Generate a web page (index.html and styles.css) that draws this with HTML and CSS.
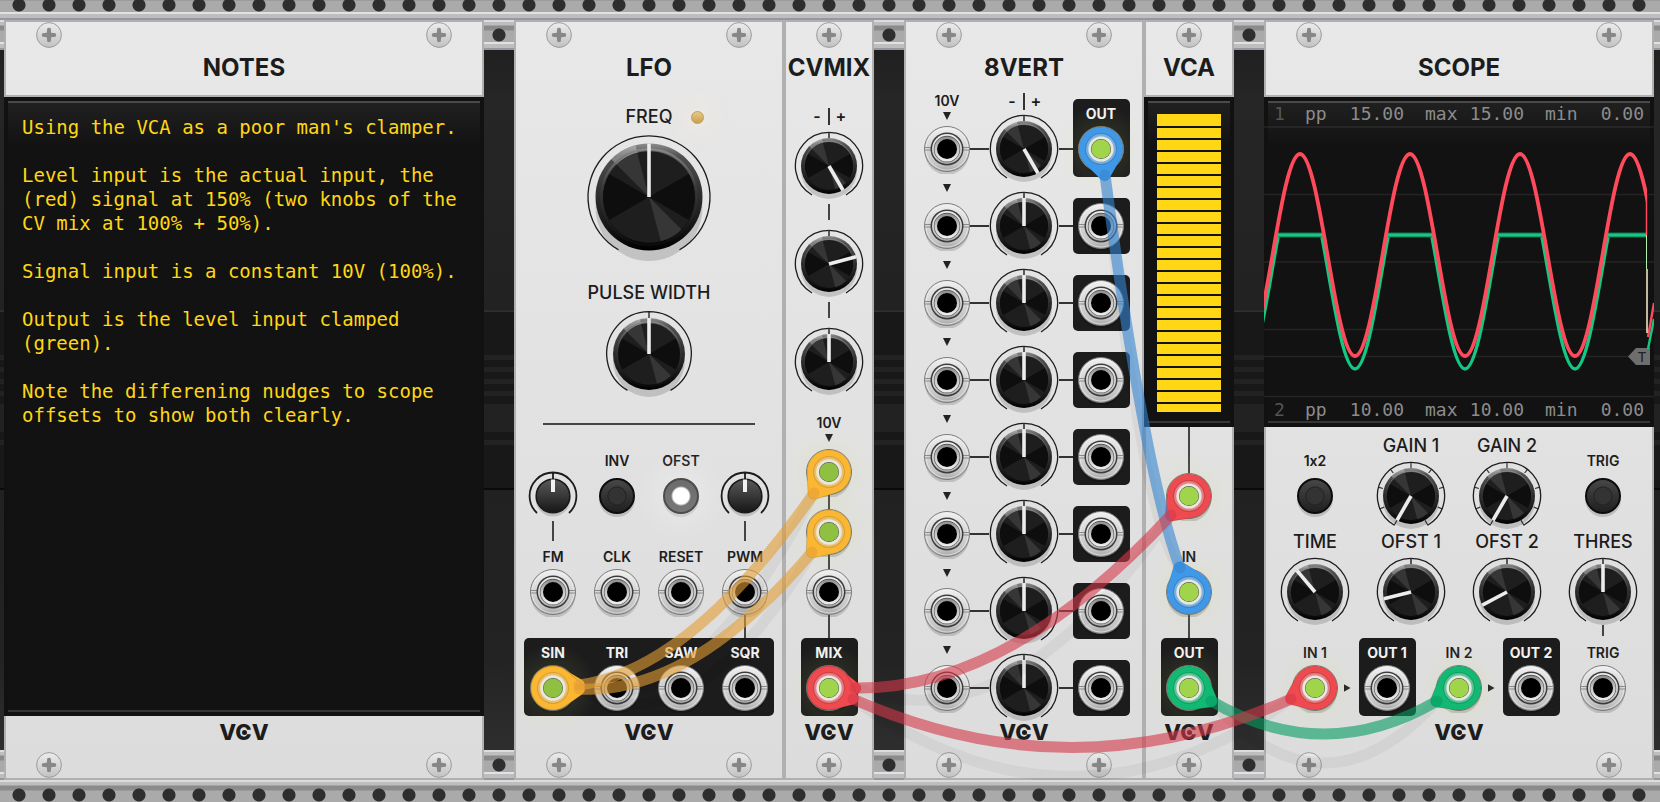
FILE: index.html
```html
<!DOCTYPE html>
<html lang="en">
<head>
<meta charset="utf-8">
<title>Modular rack</title>
<link rel="stylesheet" href="styles.css">
</head>
<body>
<svg class="sprites" aria-hidden="true">
  <defs>
    <linearGradient id="rim" x1="0" y1="0" x2="0" y2="1"><stop offset="0" stop-color="#8c8c8c"/><stop offset=".12" stop-color="#505050"/><stop offset=".5" stop-color="#2c2c2c"/><stop offset=".85" stop-color="#101010"/><stop offset="1" stop-color="#000"/></linearGradient>
    <linearGradient id="inner-rim" x1="0" y1="0" x2="0" y2="1"><stop offset="0" stop-color="#8a8a8a"/><stop offset=".4" stop-color="#3a3a3a"/><stop offset="1" stop-color="#0c0c0c"/></linearGradient>
    <linearGradient id="metal" x1="0" y1="0" x2="0" y2="1"><stop offset="0" stop-color="#f0f0f0"/><stop offset=".5" stop-color="#d4d4d4"/><stop offset=".85" stop-color="#c4c4c4"/><stop offset="1" stop-color="#a2a2a2"/></linearGradient>
    <linearGradient id="metal-low" x1="0" y1="0" x2="0" y2="1"><stop offset="0" stop-color="#8c8c8c"/><stop offset=".5" stop-color="#c8c8c8"/><stop offset="1" stop-color="#f0f0f0"/></linearGradient>
    <linearGradient id="trim-fill" x1="0" y1="0" x2="0" y2="1"><stop offset="0" stop-color="#5a5a5a"/><stop offset="1" stop-color="#161616"/></linearGradient>
    <linearGradient id="screw-fill" x1="0" y1="0" x2="0" y2="1"><stop offset="0" stop-color="#ececec"/><stop offset="1" stop-color="#c2c2c2"/></linearGradient>
    <radialGradient id="glow"><stop offset="0" stop-color="#c8dc60" stop-opacity=".22"/><stop offset=".5" stop-color="#c8dc60" stop-opacity=".08"/><stop offset="1" stop-color="#e8ecb0" stop-opacity="0"/></radialGradient>
    <clipPath id="sweep"><rect x="0" y="0" width="383" height="330"/></clipPath>
    <clipPath id="clamp"><rect x="0" y="136" width="383" height="194"/></clipPath>
  </defs>
  <symbol id="body" viewBox="-28 -28 56 56" overflow="visible">
    <circle r="28" fill="url(#rim)"/>
    <path d="M0 0L-20-20A28 28 0 0 1-7-27Z" fill="#fff" opacity=".3"/>
    <circle r="24" fill="#1e1e1e"/>
    <path d="M0 0L20.8-12A24 24 0 0 1 20.8 12ZM0 0L-20.8 12A24 24 0 0 1-20.8-12Z" fill="#0e0e0e"/>
    <path d="M0 0L17 17A24 24 0 0 1 6.2 23.2ZM0 0L-17-17A24 24 0 0 1-6.2-23.2Z" fill="#363636"/>
    <circle r="25" fill="none" stroke="url(#inner-rim)"/>
  </symbol>
  <symbol id="dial" viewBox="-35 -35 70 70">
    <circle cy="5" r="28" fill="#000" opacity=".15"/>
    <path d="M-17 29A33.6 33.6 0 1 1 17 29" fill="none" stroke="#1c1c1c" stroke-width="1.3"/>
    <use href="#body" x="-28" y="-28" width="56" height="56"/>
  </symbol>
  <symbol id="pointer" viewBox="-35 -35 70 70"><path d="M0 0V-28" stroke="#ececec" stroke-width="3.6"/></symbol>
  <symbol id="tick" viewBox="-35 -35 70 70"><path d="M0-34V-28" stroke="#333" stroke-width="1.6"/></symbol>
  <symbol id="scale" viewBox="-35 -35 70 70">
    <g stroke="#333" stroke-width="1.2"><path d="M0-34V-28"/><path d="M0-34V-29" transform="rotate(37.5)"/><path d="M0-34V-29" transform="rotate(75)"/><path d="M0-34V-29" transform="rotate(112.5)"/><path d="M0-34V-28" transform="rotate(150)"/><path d="M0-34V-29" transform="rotate(-37.5)"/><path d="M0-34V-29" transform="rotate(-75)"/><path d="M0-34V-29" transform="rotate(-112.5)"/><path d="M0-34V-28" transform="rotate(-150)"/></g>
  </symbol>
  <symbol id="trim" viewBox="-25 -25 50 50">
    <circle cy="3" r="17.5" fill="#000" opacity=".15"/>
    <path d="M-16 17A23.4 23.4 0 1 1 16 17M0-23V-17" fill="none" stroke="#1c1c1c" stroke-width="1.8"/>
    <circle r="16.8" fill="url(#trim-fill)" stroke="#1a1a1a" stroke-width="1.6"/>
    <path d="M0-4V-16.5" stroke="#f2f2f2" stroke-width="4"/>
  </symbol>
  <symbol id="jack" viewBox="-25 -25 50 50">
    <circle cy="4" r="22" fill="#000" opacity=".15"/>
    <circle r="22.5" fill="url(#metal)" stroke="#7a7a7a"/>
    <circle r="21" fill="none" stroke="#f4f4f4" stroke-width="1" opacity=".6"/>
    <path d="M-22-1.5H-15V1H-22M22-1.5H15V1H22" fill="none" stroke="#8a8a8a"/>
    <circle r="16.5" fill="#3c3c3c"/>
    <circle r="15" fill="url(#metal)"/>
    <circle r="13.2" fill="#4a4a4a"/>
    <circle r="12.6" fill="url(#metal-low)"/>
    <circle r="10" fill="#000"/>
  </symbol>
  <symbol id="screw" viewBox="-13 -13 26 26">
    <circle r="12.4" fill="url(#screw-fill)" stroke="#9b9b9b"/>
    <path d="M-1.8-6.5Q0-8 1.8-6.5L2.2-2.2L6.5-1.8Q8 0 6.5 1.8L2.2 2.2L1.8 6.5Q0 8-1.8 6.5L-2.2 2.2L-6.5 1.8Q-8 0-6.5-1.8L-2.2-2.2Z" fill="#878787"/>
  </symbol>
  <symbol id="plug" viewBox="-36 -36 72 72">
    <path d="M13.5-17.3L29.7-4.7A6 6 0 0 1 29.7 4.7L13.5 17.3A22 22 0 1 1 13.5-17.3Z" fill="currentColor" stroke="#000" stroke-opacity=".15"/>
  </symbol>
  <symbol id="socket" viewBox="-36 -36 72 72">
    <circle r="14.5" fill="none" stroke="#000" stroke-width="3" opacity=".14"/>
    <circle r="13.5" fill="none" stroke="#fff" stroke-width="3" opacity=".35"/>
    <circle r="11.3" fill="#444" stroke="#e8e8e0" stroke-width="2.6"/>
    <circle r="9.6" fill="currentColor"/>
  </symbol>
</svg>

<div class="rail rail-above"></div>
<main class="rack">
  <section class="module notes">
    <header class="head"><div class="screws"><svg class="screw"><use href="#screw"/></svg><svg class="screw"><use href="#screw"/></svg></div><h2>NOTES</h2></header>
    <textarea class="display note-text" aria-label="Notes" spellcheck="false">Using the VCA as a poor man's clamper.

Level input is the actual input, the
(red) signal at 150% (two knobs of the
CV mix at 100% + 50%).

Signal input is a constant 10V (100%).

Output is the level input clamped
(green).

Note the differening nudges to scope
offsets to show both clearly.</textarea>
    <footer class="foot"><div class="logo">V<span>C</span>V</div><div class="screws"><svg class="screw"><use href="#screw"/></svg><svg class="screw"><use href="#screw"/></svg></div></footer>
  </section>

  <div class="patch">
    <section class="module lfo">
      <header class="head"><div class="screws"><svg class="screw"><use href="#screw"/></svg><svg class="screw"><use href="#screw"/></svg></div><h2>LFO</h2></header>
      <div class="freq-row"><label class="name" for="freq">FREQ</label><span class="led"></span></div>
      <div class="dial dial-large"><svg viewBox="-65 -65 130 130"><circle cy="10.5" r="53.5" opacity=".15"/><path class="ring" d="M-30.5 52.8A61 61 0 1 1 30.5 52.8"/><use href="#body" x="-53.5" y="-53.5" width="107" height="107"/><path class="hand" d="M0 0V-53.5"/></svg><input id="freq" type="range"></div>
      <label class="name width-name" for="pw">PULSE WIDTH</label>
      <div class="dial dial-medium"><svg viewBox="-46 -46 92 92"><circle cy="7" r="36" opacity=".15"/><path class="ring" d="M-21.5 36.4A42.3 42.3 0 1 1 21.5 36.4M0-42V-36"/><use href="#body" x="-36" y="-36" width="72" height="72"/><path class="hand" d="M0 0V-36"/></svg><input id="pw" type="range"></div>
      <hr class="divider">
      <div class="quad">
        <div class="cell"><span class="tag"></span><div class="dial dial-trim"><svg><use href="#trim"/></svg><input type="range" aria-label="FM amount"></div></div>
        <div class="cell"><label class="tag" for="inv">INV</label><button id="inv" class="push" type="button"></button></div>
        <div class="cell"><label class="tag" for="ofst">OFST</label><button id="ofst" class="push on" type="button"></button></div>
        <div class="cell"><span class="tag"></span><div class="dial dial-trim"><svg><use href="#trim"/></svg><input type="range" aria-label="PWM amount"></div></div>
      </div>
      <div class="quad stubs"><i class="wire"></i><i></i><i></i><i class="wire"></i></div>
      <div class="quad">
        <div class="cell"><span class="tag">FM</span><svg class="jack"><use href="#jack"/></svg></div>
        <div class="cell"><span class="tag">CLK</span><svg class="jack"><use href="#jack"/></svg></div>
        <div class="cell"><span class="tag">RESET</span><svg class="jack"><use href="#jack"/></svg></div>
        <div class="cell"><span class="tag">PWM</span><svg class="jack"><use href="#jack"/></svg></div>
      </div>
      <div class="quad link"><i></i><i></i><i></i><i class="wire"></i></div>
      <div class="plate quad wide">
        <div class="cell"><span class="tag">SIN</span><svg class="jack"><use href="#jack"/></svg></div>
        <div class="cell"><span class="tag">TRI</span><svg class="jack"><use href="#jack"/></svg></div>
        <div class="cell"><span class="tag">SAW</span><svg class="jack"><use href="#jack"/></svg></div>
        <div class="cell"><span class="tag">SQR</span><svg class="jack"><use href="#jack"/></svg></div>
      </div>
      <footer class="foot"><div class="logo">V<span>C</span>V</div><div class="screws"><svg class="screw"><use href="#screw"/></svg><svg class="screw"><use href="#screw"/></svg></div></footer>
    </section>

    <section class="module narrow">
      <header class="head"><div class="screws"><svg class="screw"><use href="#screw"/></svg></div><h2>CVMIX</h2></header>
      <div class="polarity mix-polarity"><span>-</span><i></i><span>+</span></div>
      <div class="dial"><svg><use href="#dial"/><use href="#tick"/><use href="#pointer" transform="rotate(150 35 35)"/></svg><input type="range" aria-label="Level 1"></div>
      <i class="wire dash"></i>
      <div class="dial"><svg><use href="#dial"/><use href="#tick"/><use href="#pointer" transform="rotate(75 35 35)"/></svg><input type="range" aria-label="Level 2"></div>
      <i class="wire dash"></i>
      <div class="dial"><svg><use href="#dial"/><use href="#tick"/><use href="#pointer"/></svg><input type="range" aria-label="Level 3"></div>
      <span class="tag mix-volt">10V</span>
      <i class="tri mix-tri"></i>
      <svg class="jack"><use href="#jack"/></svg><i class="wire hop"></i>
      <svg class="jack"><use href="#jack"/></svg><i class="wire hop"></i>
      <svg class="jack"><use href="#jack"/></svg><i class="wire join"></i>
      <div class="plate"><span class="tag">MIX</span><svg class="jack"><use href="#jack"/></svg></div>
      <footer class="foot"><div class="logo">V<span>C</span>V</div><div class="screws"><svg class="screw"><use href="#screw"/></svg></div></footer>
    </section>

    <section class="module vert">
      <header class="head"><div class="screws"><svg class="screw"><use href="#screw"/></svg><svg class="screw"><use href="#screw"/></svg></div><h2>8VERT</h2></header>
      <div class="columns">
        <div class="inputs">
          <span class="tag">10V</span><i class="tri first"></i><svg class="jack"><use href="#jack"/></svg>
          <i class="tri"></i><svg class="jack"><use href="#jack"/></svg>
          <i class="tri"></i><svg class="jack"><use href="#jack"/></svg>
          <i class="tri"></i><svg class="jack"><use href="#jack"/></svg>
          <i class="tri"></i><svg class="jack"><use href="#jack"/></svg>
          <i class="tri"></i><svg class="jack"><use href="#jack"/></svg>
          <i class="tri"></i><svg class="jack"><use href="#jack"/></svg>
          <i class="tri"></i><svg class="jack"><use href="#jack"/></svg>
        </div>
        <div class="gains">
          <div class="polarity"><span>-</span><i></i><span>+</span></div>
          <div class="dial"><svg><use href="#dial"/><use href="#tick"/><use href="#pointer" transform="rotate(150 35 35)"/></svg><input type="range" aria-label="Gain 1"></div>
          <div class="dial"><svg><use href="#dial"/><use href="#tick"/><use href="#pointer"/></svg><input type="range" aria-label="Gain 2"></div>
          <div class="dial"><svg><use href="#dial"/><use href="#tick"/><use href="#pointer"/></svg><input type="range" aria-label="Gain 3"></div>
          <div class="dial"><svg><use href="#dial"/><use href="#tick"/><use href="#pointer"/></svg><input type="range" aria-label="Gain 4"></div>
          <div class="dial"><svg><use href="#dial"/><use href="#tick"/><use href="#pointer"/></svg><input type="range" aria-label="Gain 5"></div>
          <div class="dial"><svg><use href="#dial"/><use href="#tick"/><use href="#pointer"/></svg><input type="range" aria-label="Gain 6"></div>
          <div class="dial"><svg><use href="#dial"/><use href="#tick"/><use href="#pointer"/></svg><input type="range" aria-label="Gain 7"></div>
          <div class="dial"><svg><use href="#dial"/><use href="#tick"/><use href="#pointer"/></svg><input type="range" aria-label="Gain 8"></div>
        </div>
        <div class="outputs">
          <div class="plate"><span class="tag">OUT</span><svg class="jack"><use href="#jack"/></svg></div>
          <div class="plate bare"><svg class="jack"><use href="#jack"/></svg></div>
          <div class="plate bare"><svg class="jack"><use href="#jack"/></svg></div>
          <div class="plate bare"><svg class="jack"><use href="#jack"/></svg></div>
          <div class="plate bare"><svg class="jack"><use href="#jack"/></svg></div>
          <div class="plate bare"><svg class="jack"><use href="#jack"/></svg></div>
          <div class="plate bare"><svg class="jack"><use href="#jack"/></svg></div>
          <div class="plate bare"><svg class="jack"><use href="#jack"/></svg></div>
        </div>
      </div>
      <footer class="foot"><div class="logo">V<span>C</span>V</div><div class="screws"><svg class="screw"><use href="#screw"/></svg><svg class="screw"><use href="#screw"/></svg></div></footer>
    </section>

    <section class="module narrow">
      <header class="head tall"><div class="screws"><svg class="screw"><use href="#screw"/></svg></div><h2>VCA</h2></header>
      <div class="display level"><div class="bars" role="meter" aria-label="Level" aria-valuemin="0" aria-valuemax="25" aria-valuenow="25"></div></div>
      <i class="wire feed"></i>
      <svg class="jack"><use href="#jack"/></svg>
      <span class="tag vca-in">IN</span>
      <svg class="jack"><use href="#jack"/></svg><i class="wire join"></i>
      <div class="plate"><span class="tag">OUT</span><svg class="jack"><use href="#jack"/></svg></div>
      <footer class="foot"><div class="logo">V<span>C</span>V</div><div class="screws"><svg class="screw"><use href="#screw"/></svg></div></footer>
    </section>

    <section class="module scope">
      <header class="head tall"><div class="screws"><svg class="screw"><use href="#screw"/></svg><svg class="screw"><use href="#screw"/></svg></div><h2>SCOPE</h2></header>
      <div class="display screen">
        <svg class="trace" viewBox="0 0 390 330" preserveAspectRatio="none" aria-hidden="true">
          <path d="M0 30H390M0 97.5H390M0 165H390M0 232.5H390M0 299.5H390M0 259.5H366" stroke="#fff" stroke-opacity=".08" stroke-width="1.5"/>
          <path d="M364 259.5L372 251H386V268H372Z" fill="#6e6e6e"/>
          <text x="378" y="265" class="trig-letter">T</text>
          <g fill="none" stroke-linejoin="round">
            <path clip-path="url(#clamp)" stroke="#14c884" stroke-width="3.4" d="M-19 272C1 272 16 70 36 70C56 70 71 272 91 272C111 272 126 70 146 70C166 70 181 272 201 272C221 272 236 70 256 70C276 70 291 272 311 272C331 272 346 70 366 70C386 70 401 272 421 272"/>
            <path stroke="#14704c" stroke-width="5" d="M14 138H58M124 138H168M234 138H278M344 138H383"/>
            <path stroke="#14c884" stroke-width="3" d="M14 138H58M124 138H168M234 138H278M344 138H383"/>
            <path clip-path="url(#sweep)" stroke="#ff4a5c" stroke-width="3.8" d="M-19 259C1 259 16 57 36 57C56 57 71 259 91 259C111 259 126 57 146 57C166 57 181 259 201 259C221 259 236 57 256 57C276 57 291 259 311 259C331 259 346 57 366 57C386 57 401 259 421 259"/>
            <path stroke="#14c884" stroke-width="2.4" d="M384 252L390 222"/>
            <path stroke="#ff4a5c" stroke-width="2.4" d="M384 240L390 206"/>
            <path stroke="#ff4a5c" stroke-width="1.5" d="M382.5 98V138"/>
            <path stroke="#b8f0b0" d="M382.5 138V172"/>
            <path stroke="#fff0d0" stroke-width="1.5" d="M383 172V236"/>
          </g>
        </svg>
        <dl class="stats"><dt class="ch">1</dt><div><dt>pp</dt><dd>15.00</dd></div><div><dt>max</dt><dd>15.00</dd></div><div><dt>min</dt><dd>0.00</dd></div></dl>
        <dl class="stats"><dt class="ch">2</dt><div><dt>pp</dt><dd>10.00</dd></div><div><dt>max</dt><dd>10.00</dd></div><div><dt>min</dt><dd>0.00</dd></div></dl>
      </div>
      <div class="knob-grid">
        <div class="cell low"><label class="tag" for="x12">1x2</label><button id="x12" class="push" type="button"></button></div>
        <div class="cell"><label class="name" for="g1">GAIN 1</label><div class="dial"><svg><use href="#scale"/><use href="#dial"/><use href="#pointer" transform="rotate(-150 35 35)"/></svg><input id="g1" type="range"></div></div>
        <div class="cell"><label class="name" for="g2">GAIN 2</label><div class="dial"><svg><use href="#scale"/><use href="#dial"/><use href="#pointer" transform="rotate(-150 35 35)"/></svg><input id="g2" type="range"></div></div>
        <div class="cell low"><label class="tag" for="trg">TRIG</label><button id="trg" class="push" type="button"></button></div>
        <div class="cell"><label class="name" for="time">TIME</label><div class="dial"><svg><use href="#dial"/><use href="#pointer" transform="rotate(-40 35 35)"/></svg><input id="time" type="range"></div></div>
        <div class="cell"><label class="name" for="o1">OFST 1</label><div class="dial"><svg><use href="#dial"/><use href="#tick"/><use href="#pointer" transform="rotate(-104 35 35)"/></svg><input id="o1" type="range"></div></div>
        <div class="cell"><label class="name" for="o2">OFST 2</label><div class="dial"><svg><use href="#dial"/><use href="#tick"/><use href="#pointer" transform="rotate(-118 35 35)"/></svg><input id="o2" type="range"></div></div>
        <div class="cell"><label class="name" for="thres">THRES</label><div class="dial"><svg><use href="#dial"/><use href="#tick"/><use href="#pointer"/></svg><input id="thres" type="range"></div></div>
        <i class="wire thres-stub"></i>
      </div>
      <div class="ports">
        <div class="port"><span class="tag">IN 1</span><svg class="jack"><use href="#jack"/></svg></div><i class="arrow"></i>
        <div class="plate"><span class="tag">OUT 1</span><svg class="jack"><use href="#jack"/></svg></div><i></i>
        <div class="port"><span class="tag">IN 2</span><svg class="jack"><use href="#jack"/></svg></div><i class="arrow"></i>
        <div class="plate"><span class="tag">OUT 2</span><svg class="jack"><use href="#jack"/></svg></div><i></i>
        <div class="port"><span class="tag">TRIG</span><svg class="jack"><use href="#jack"/></svg></div>
      </div>
      <footer class="foot"><div class="logo">V<span>C</span>V</div><div class="screws"><svg class="screw"><use href="#screw"/></svg><svg class="screw"><use href="#screw"/></svg></div></footer>
    </section>

    <svg class="cables" viewBox="514 20 1140 760" aria-hidden="true">
      <g fill="url(#glow)"><circle cx="553" cy="688" r="44"/><circle cx="829" cy="472" r="44"/><circle cx="829" cy="532" r="44"/><circle cx="829" cy="688" r="44"/><circle cx="1101" cy="149" r="44"/><circle cx="1189" cy="496" r="44"/><circle cx="1189" cy="592" r="44"/><circle cx="1189" cy="688" r="44"/><circle cx="1315" cy="688" r="44"/><circle cx="1459" cy="688" r="44"/></g>
      <g class="shade">
        <path d="M579 685Q691 728 814 493"/><path d="M579 689Q691 753 812 552"/><path d="M855 688Q1009 748 1171 515"/><path d="M853 699Q1072 854 1291 699"/><path d="M1105 175Q1145 533 1180 568"/><path d="M1211 701Q1324 825 1437 701"/>
      </g>
      <g class="yellow">
        <use href="#plug" width="72" height="72" transform="translate(553 688) rotate(-7) translate(-36 -36)"/>
        <use href="#plug" width="72" height="72" transform="translate(553 688) rotate(3) translate(-36 -36)"/>
        <use href="#plug" width="72" height="72" transform="translate(829 472) rotate(125) translate(-36 -36)"/>
        <use href="#plug" width="72" height="72" transform="translate(829 532) rotate(130) translate(-36 -36)"/>
      </g>
      <g class="red">
        <use href="#plug" width="72" height="72" transform="translate(829 688) rotate(1) translate(-36 -36)"/>
        <use href="#plug" width="72" height="72" transform="translate(829 688) rotate(24) translate(-36 -36)"/>
        <use href="#plug" width="72" height="72" transform="translate(1189 496) rotate(133) translate(-36 -36)"/>
        <use href="#plug" width="72" height="72" transform="translate(1315 688) rotate(156) translate(-36 -36)"/>
      </g>
      <g class="blue">
        <use href="#plug" width="72" height="72" transform="translate(1101 149) rotate(82) translate(-36 -36)"/>
        <use href="#plug" width="72" height="72" transform="translate(1189 592) rotate(249) translate(-36 -36)"/>
      </g>
      <g class="green">
        <use href="#plug" width="72" height="72" transform="translate(1189 688) rotate(30) translate(-36 -36)"/>
        <use href="#plug" width="72" height="72" transform="translate(1459 688) rotate(150) translate(-36 -36)"/>
      </g>
      <g class="cords">
        <path stroke="#e49e35" d="M579 685Q691 670 814 493"/><path stroke="#e49e35" d="M579 689Q691 695 812 552"/>
        <path stroke="#3585d2" d="M1105 175Q1145 475 1180 568"/>
        <path stroke="#059d64" d="M1211 701Q1324 767 1437 701"/>
        <path stroke="#d53948" d="M855 688Q1009 690 1171 515"/><path stroke="#d53948" d="M853 699Q1072 796 1291 699"/>
      </g>
      <g class="lamp-dim"><use href="#socket" x="517" y="652" width="72" height="72"/><use href="#socket" x="793" y="436" width="72" height="72"/><use href="#socket" x="793" y="496" width="72" height="72"/></g>
      <g class="lamp"><use href="#socket" x="793" y="652" width="72" height="72"/><use href="#socket" x="1065" y="113" width="72" height="72"/><use href="#socket" x="1153" y="460" width="72" height="72"/><use href="#socket" x="1153" y="556" width="72" height="72"/><use href="#socket" x="1153" y="652" width="72" height="72"/><use href="#socket" x="1279" y="652" width="72" height="72"/><use href="#socket" x="1423" y="652" width="72" height="72"/></g>
    </svg>
  </div>
</main>
<div class="rail rail-below"></div>
</body>
</html>
```

FILE: styles.css
```css
* { box-sizing: border-box; }

body {
  margin: 0;
  min-height: 100vh;
  display: flex;
  flex-direction: column;
  background: #222;
  color: #1c1c1c;
  font-family: Inter, "Liberation Sans", sans-serif;
  font-feature-settings: "calt" 0;
  --holes: radial-gradient(circle at 15px 15px, #2e2e2e 6px, #2e2e2e00 7px);
  --bar: linear-gradient(#dcdcdc 0 2px, #bebebe 2px 5px, #8a8a8a 6px, #8c8c8c 10px, #aaa 11px 22px, #e2e2e2 22px 24px, #bebebe 24px 28px, #98979f 28px 30px);
}

.sprites { position: absolute; width: 0; height: 0; }
i { display: block; }

/* rails and rack row */
.rail {
  background-image: var(--holes), var(--bar);
  background-size: 30px 30px;
  background-repeat: repeat-x;
}
.rail-above { height: 20px; background-position: 4px bottom; }
.rail-below { flex: 1 0 22px; background-position: 4px top; }

.rack {
  display: flex;
  gap: 30px;
  padding: 0 6px 0 4px;
  background:
    var(--holes) 4px 0 / 30px 30px repeat-x,
    var(--bar) 0 0 / 30px 30px repeat-x,
    var(--holes) 4px 100% / 30px 30px repeat-x,
    var(--bar) 0 100% / 30px 30px repeat-x,
    linear-gradient(#202020 0 30px, #262626 80px, #222 290px, #303030 291px 292px, #181818 292px 335px,
      #222 335px 340px, #181818 340px 347px, #222 347px 352px, #181818 352px 359px, #222 359px 364px,
      #181818 364px 371px, #222 371px 376px, #181818 376px 384px, #222 384px 412px, #181818 412px 420px,
      #222 420px 425px, #181818 425px 468px, #0a0a0a 468px 470px, #212121 470px, #232323 640px, #2e2e2e 730px);
}

.patch { position: relative; display: flex; flex: none; }

/* modules */
.module {
  position: relative;
  z-index: 0;
  flex: none;
  display: flex;
  flex-direction: column;
  align-items: center;
  background: linear-gradient(#e8e8e8, #dcdcdc);
  box-shadow: inset 0 0 0 2px #b0b0b0;
}
.notes { flex: 1 1 480px; min-width: 0; }
.lfo { width: 270px; }
.narrow { width: 90px; }
.vert { width: 240px; margin-left: 30px; }
.scope { width: 390px; margin-left: 30px; }

.head { width: 100%; padding-top: 2px; }
.notes .head, .head.tall { height: 77px; box-shadow: inset 0 -2px #b0b0b0; }
.head h2 { margin: 0; font-size: 24px; line-height: 40px; font-weight: 700; text-align: center; }
.screws { display: flex; justify-content: space-between; padding: 0 32px; }
.screw { width: 26px; height: 26px; flex: none; }
.foot { width: 100%; margin-top: auto; padding: 8px 0 2px; display: grid; gap: 12px; }
.logo {
  justify-self: center;
  font-size: 22px;
  line-height: 16px;
  font-weight: 800;
}
.logo span { position: relative; }
.logo span::after {
  content: "";
  position: absolute;
  left: 7px; top: 11px;
  width: 5px; height: 5px;
  border-radius: 50%;
  background: #1c1c1c;
}

/* text labels */
.name { font-size: 18px; line-height: 22px; font-weight: 500; white-space: nowrap; }
.tag { display: block; height: 20px; font-size: 14px; line-height: 20px; font-weight: 600; white-space: nowrap; }
.plate .tag { color: #f2f2f2; font-weight: 700; }

/* controls */
.dial { position: relative; width: 70px; height: 70px; flex: none; }
.dial svg { display: block; width: 100%; height: 100%; }
.dial input { position: absolute; inset: 0; width: 100%; height: 100%; margin: 0; opacity: 0; cursor: grab; }
.dial-large { width: 130px; height: 130px; margin-top: 4px; }
.dial-medium { width: 92px; height: 92px; margin-top: 4px; }
.dial-trim { width: 50px; height: 50px; }
.ring { fill: none; stroke: #1c1c1c; stroke-width: 1.3; }
.hand { stroke: #ececec; stroke-width: 3.6; }
.jack { display: block; flex: none; width: 50px; height: 50px; }

.push {
  width: 36px; height: 36px;
  margin: 7px 0;
  padding: 0;
  border: 2px solid #0c0c0c;
  border-radius: 50%;
  background: radial-gradient(circle, #333 8px, #222 9px, #2220 10px), linear-gradient(#474747, #202020);
  box-shadow: 0 3px 0 #00000026;
}
.push.on {
  border-color: #4c4c4c;
  background: radial-gradient(circle, #fff 8px, #fff0 10px), linear-gradient(#6c6c6c, #777);
  box-shadow: 0 3px 0 #00000018, 0 0 30px 8px #ffffff50;
}

.cell, .plate, .port { display: flex; flex-direction: column; align-items: center; }
.plate { width: 57px; padding: 5px 0 3px; border-radius: 5px; background: #1c1c1c; }
.plate.bare { padding-top: 3px; }

.wire { width: 2px; background: #444; }
.tri { width: 8px; height: 8px; background: #222; clip-path: polygon(0 0, 100% 0, 50% 100%); }
.arrow { width: 7px; height: 8px; margin-top: 46px; background: #222; clip-path: polygon(0 0, 100% 50%, 0 100%); }

.polarity { display: grid; grid-template-columns: 12px 12px 12px; justify-items: center; align-items: center; height: 24px; font-size: 16px; font-weight: 600; }
.polarity i { width: 2px; height: 17px; background: #333; }

/* LFO */
.freq-row { display: grid; grid-template-columns: 1fr auto 1fr; align-items: center; width: 100%; margin-top: 18px; }
.freq-row .name { grid-column: 2; }
.led { width: 13px; height: 13px; margin-left: 19px; border-radius: 50%; background: linear-gradient(#e6c988, #c9a04e); border: 1px solid #bb9c5c; box-shadow: 0 0 24px 8px #fff0e060; }
.width-name { margin-top: 20px; }
.divider { width: 212px; height: 2px; margin: 23px 0 26px; border: 0; background: #444; }
.quad { display: grid; grid-template-columns: repeat(4, 64px); justify-content: center; justify-items: center; }
.quad.wide { width: 250px; }
.stubs { height: 26px; align-content: start; }
.stubs .wire { height: 20px; }
.link .wire { height: 23px; margin-top: -2px; }
.lfo > .quad { flex: none; }

/* CV mix and VCA */
.mix-polarity { margin: 16px 0 3px; }
.dash { height: 16px; margin: 3px 0 9px; }
.mix-volt { margin-top: 16px; }
.mix-tri { margin: 1px 0 5px; }
.hop { height: 14px; margin: -2px 0; }
.join { height: 23px; margin-top: -2px; }
.feed { height: 46px; margin-bottom: -2px; }
.vca-in { margin-top: 26px; }

/* 8vert */
.columns { display: grid; grid-template-columns: repeat(3, 77px); justify-items: center; margin-bottom: -7px; }
.inputs, .gains, .outputs { display: flex; flex-direction: column; align-items: center; }
.inputs { padding-top: 3px; }
.inputs .tri { margin: 10px 0 9px; }
.inputs .tri.first { margin: 1px 0 4px; }
.gains { padding-top: 1px; gap: 7px; }
.gains .polarity { margin-bottom: -6px; }
.gains .dial::before, .gains .dial::after { content: ""; position: absolute; top: 34px; height: 2px; background: #333; }
.gains .dial::before { right: 100%; width: 19px; }
.gains .dial::after { left: 100%; width: 14px; }
.outputs { padding-top: 11px; gap: 21px; }

/* displays */
.display {
  width: 100%;
  border: 4px solid #111;
  background: linear-gradient(#4a4a4a 0 2px, #202020 2px, #121212 45px) no-repeat;
  background-color: #121212;
  box-shadow: inset 0 -2px #363636;
}
.note-text {
  display: block;
  flex: 1;
  min-height: 0;
  margin: 0;
  padding: 14px 0 0 14px;
  border-radius: 0;
  resize: none;
  outline: none;
  overflow: hidden;
  color: #ffd714;
  font: 19px/24px "DejaVu Sans Mono", "Liberation Mono", monospace;
  white-space: pre-wrap;
}
.level { height: 330px; padding: 13px 9px 0; }
.bars { height: 298px; background: repeating-linear-gradient(#ffd714 0 10px, #121212 10px 12px) 0 2px; }

.screen { position: relative; height: 330px; display: flex; flex-direction: column; justify-content: space-between; }
.trace { position: absolute; left: -4px; top: -4px; width: calc(100% + 8px); height: calc(100% + 8px); }
.trig-letter { font: 14px "DejaVu Sans Mono", monospace; text-anchor: middle; fill: #222; }
.stats {
  position: relative;
  display: grid;
  grid-template-columns: 10px repeat(3, 99px);
  column-gap: 21px;
  justify-content: end;
  margin: 0;
  padding: 3px 6px;
  color: #8c8c8c;
  font: 18px/20px "DejaVu Sans Mono", "Liberation Mono", monospace;
}
.stats div { display: flex; justify-content: space-between; }
.stats dd { margin: 0; }
.stats .ch { color: #555; }

/* scope controls */
.knob-grid { display: grid; grid-template-columns: repeat(4, 96px); padding-top: 8px; justify-content: center; }
.knob-grid .name { margin-bottom: 4px; }
.low { padding-top: 16px; }
.thres-stub { grid-column: 4; justify-self: center; height: 11px; margin-top: -2px; margin-bottom: 2px; }
.ports { display: grid; grid-template-columns: 57px 15px 57px 15px 57px 15px 57px 15px 57px; }
.port { padding-top: 5px; }

/* cables */
.cables { position: absolute; inset: 0; width: 100%; height: 100%; z-index: 1; pointer-events: none; }
.shade, .cords { fill: none; stroke-width: 11; stroke-linecap: round; }
.shade { stroke: #000; opacity: .04; }
.cords path { opacity: .6; }
.yellow { color: #fcb732; }
.red { color: #ef4a50; }
.blue { color: #3f99e8; }
.green { color: #12b973; }
.lamp { color: #a0d44a; }
.lamp-dim { color: #90c042; }
```
